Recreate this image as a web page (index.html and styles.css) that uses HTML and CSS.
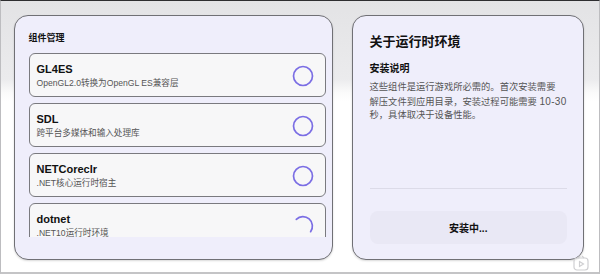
FILE: index.html
```html
<!DOCTYPE html>
<html lang="zh-CN">
<head>
<meta charset="utf-8">
<link rel="stylesheet" href="styles.css">
</head>
<body>
<div class="frame">
  <section class="panel left">
    <h2 class="section-title">组件管理</h2>
    <div class="list">
      <div class="card">
        <div class="info"><div class="name">GL4ES</div><div class="desc">OpenGL2.0转换为OpenGL ES兼容层</div></div>
        <svg class="ring" viewBox="0 0 22 22"><circle cx="11" cy="11" r="9.5"/></svg>
      </div>
      <div class="card">
        <div class="info"><div class="name">SDL</div><div class="desc">跨平台多媒体和输入处理库</div></div>
        <svg class="ring" viewBox="0 0 22 22"><circle cx="11" cy="11" r="9.5"/></svg>
      </div>
      <div class="card">
        <div class="info"><div class="name">NETCoreclr</div><div class="desc">.NET核心运行时宿主</div></div>
        <svg class="ring" viewBox="0 0 22 22"><circle cx="11" cy="11" r="9.5"/></svg>
      </div>
      <div class="card">
        <div class="info"><div class="name">dotnet</div><div class="desc">.NET10运行时环境</div></div>
        <svg class="ring" viewBox="0 0 22 22"><path d="M4.3 4.3 A9.5 9.5 0 0 1 18.6 16.7"/></svg>
      </div>
    </div>
  </section>
  <section class="panel right">
    <h1 class="about-title">关于运行时环境</h1>
    <h3 class="sub-title">安装说明</h3>
    <p class="text">这些组件是运行游戏所必需的。首次安装需要<br>解压文件到应用目录，安装过程可能需要 <span class="num">10-30</span> 秒，具体取决于设备性能。</p>
    <div class="divider"></div>
    <div class="button">安装中...</div>
  </section>
  <svg class="wm" viewBox="0 0 16 16"><rect x="1" y="3" width="14" height="12" rx="3"/><path d="M6.5 6.5 L10.5 9 L6.5 11.5 Z"/><path d="M5 3 L7 1 M11 3 L9 1"/></svg>
</div>
</body>
</html>
```
FILE: styles.css
```css
* { box-sizing: border-box; margin: 0; padding: 0; }
html, body { width: 600px; height: 274px; overflow: hidden; }
body {
  font-family: "Liberation Sans", "Noto Sans CJK SC", sans-serif;
  background: #fff;
}
.frame {
  position: relative;
  width: 600px;
  height: 274px;
  border-top: 1px solid #2e2e30;
  border-left: 1px solid #bdbdc0;
  border-right: 1px solid #bdbdc0;
  border-bottom: 2px solid #c4c4c6;
  background: linear-gradient(#e3e3e5 0, #ebebed 78px, #fbfbfb 92px, #fff 100px);
  display: flex;
  gap: 19px;
  padding: 14px 0 0 13px;
}
.panel {
  height: 245px;
  border: 1.5px solid #707075;
  border-radius: 14px;
  background: #efeefb;
  box-shadow: 0 1px 2px rgba(0,0,0,0.15);
}
.left {
  width: 319px;
  padding: 16px 6px 0 13.5px;
}
.section-title {
  font-size: 9px;
  font-weight: bold;
  color: #111;
  line-height: 12px;
  margin-bottom: 9px;
}
.list {
  height: 184px;
  overflow: hidden;
  display: flex;
  flex-direction: column;
  gap: 6px;
}
.card {
  flex: none;
  height: 44px;
  background: #f7f7f8;
  border: 1px solid #7a7a7f;
  border-radius: 6px;
  display: flex;
  align-items: center;
  justify-content: space-between;
  padding: 1px 11px 0 7px;
}
.name {
  font-size: 11px;
  font-weight: bold;
  color: #111;
  line-height: 14px;
}
.desc {
  font-size: 8.6px;
  color: #555;
  line-height: 12px;
  margin-top: 1px;
}
.ring {
  width: 22px;
  height: 22px;
  fill: none;
  stroke: #7b6ee4;
  stroke-width: 1.7;
  stroke-linecap: round;
}
.right {
  width: 232px;
  padding: 17px 10px 15px 16.5px;
  display: flex;
  flex-direction: column;
}
.about-title {
  font-size: 13px;
  font-weight: bold;
  color: #111;
  line-height: 18px;
}
.sub-title {
  font-size: 10px;
  font-weight: bold;
  color: #111;
  line-height: 14px;
  margin-top: 11px;
}
.text {
  font-size: 9.3px;
  color: #555;
  line-height: 13.5px;
  margin-top: 5px;
}
.num { font-size: 10px; letter-spacing: 0.3px; }
.divider {
  margin-top: auto;
  margin-right: 6px;
  height: 1px;
  background: #dcdbe8;
}
.button {
  margin-top: 22px;
  margin-right: 6px;
  height: 33px;
  border-radius: 8px;
  background: #e9e8f5;
  display: flex;
  align-items: center;
  justify-content: center;
  font-size: 10px;
  font-weight: bold;
  color: #111;
}
.wm {
  position: absolute;
  left: 572px;
  top: 254px;
  width: 16px;
  height: 16px;
  fill: none;
  stroke: #cfcfd2;
  stroke-width: 1.2;
}
```
